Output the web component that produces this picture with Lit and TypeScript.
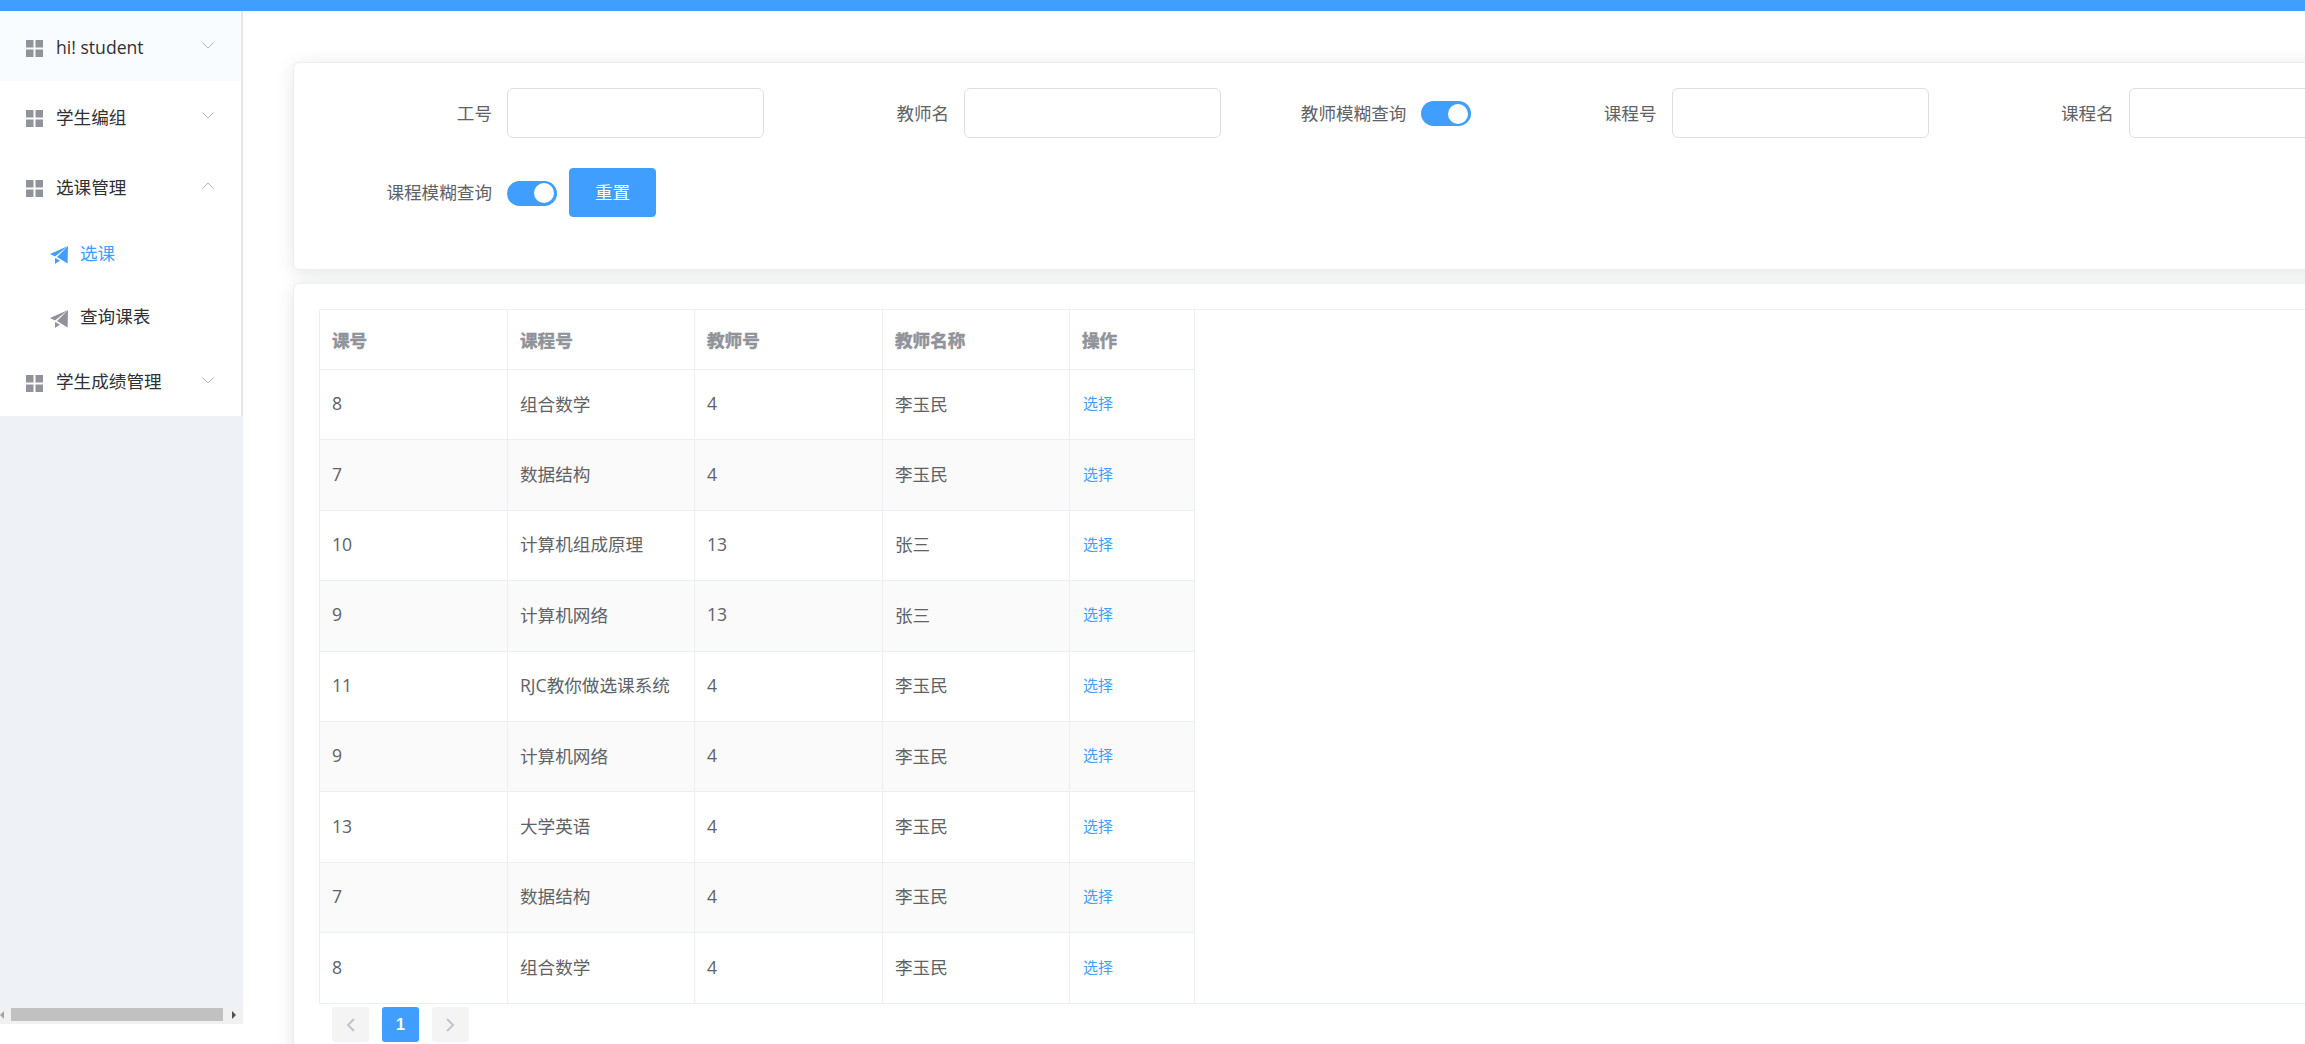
import {LitElement, html, css, svg} from 'lit';
import {customElement} from 'lit/decorators.js';

const ROWS = [
  ['8', '组合数学', '4', '李玉民'],
  ['7', '数据结构', '4', '李玉民'],
  ['10', '计算机组成原理', '13', '张三'],
  ['9', '计算机网络', '13', '张三'],
  ['11', 'RJC教你做选课系统', '4', '李玉民'],
  ['9', '计算机网络', '4', '李玉民'],
  ['13', '大学英语', '4', '李玉民'],
  ['7', '数据结构', '4', '李玉民'],
  ['8', '组合数学', '4', '李玉民'],
];

const gridIcon = html`<svg class="grid-icon" width="17" height="17" viewBox="0 0 17 17">
  <rect width="7.5" height="7.5"></rect>
  <rect x="9.5" width="7.5" height="7.5"></rect>
  <rect y="9.5" width="7.5" height="7.5"></rect>
  <rect x="9.5" y="9.5" width="7.5" height="7.5"></rect>
</svg>`;

const planeIcon = svg`<svg class="plane" width="18" height="18" viewBox="0 0 18 18">
  <path d="M18 0 0 8l5 2.6z"></path>
  <path d="M18 0 7 11l10.6 6.4z"></path>
  <path d="M5 12v6l5-3.4z"></path>
</svg>`;

const chevron = (up = false) => html`<svg class="chevron" width="12" height="7" viewBox="0 0 12 7">
  <path d=${up ? 'M.5 6.5 6 1l5.5 5.5' : 'M.5.5 6 6 11.5.5'}></path>
</svg>`;

@customElement('app-root')
class AppRoot extends LitElement {
  static styles = css`
    :host {
      display: block;
      height: 1044px;
      overflow: hidden;
      background: #fff;
      font-family: 'Open Sans', 'Noto Sans CJK SC', sans-serif;
      font-size: 17.6px;
      color: #606266;
    }
    .topbar {
      height: 11px;
      background: #409eff;
    }
    .layout {
      display: flex;
      height: 1033px;
    }

    .sidebar {
      flex: 0 0 243px;
      height: 1013px;
      display: flex;
      flex-direction: column;
      background: #eef1f6;
    }
    .menu {
      display: grid;
      grid-template-rows: 70px 70px 70px 64px 63px 68px;
      width: 241px;
      background: #fff;
      box-shadow: 2px 0 0 #e6e6e6;
      color: #303133;
    }
    .menu-item {
      display: flex;
      align-items: center;
      padding-left: 26px;
    }
    .menu-item.hover {
      background: #f9fcff;
    }
    .menu-item.hover span {
      margin-top: 2px;
    }
    .menu-item.last {
      padding-bottom: 3px;
    }
    .menu-item span {
      margin-left: 13px;
    }
    .menu-item .grid-icon {
      margin-top: 5px;
    }
    .menu-item .chevron {
      margin-left: auto;
      margin-right: 27px;
      margin-top: -1px;
    }
    .sub-item {
      display: flex;
      align-items: center;
      padding: 0 0 2px 50px;
    }
    .sub-item span {
      margin-left: 12px;
    }
    .sub-item.active {
      color: #409eff;
    }
    .plane {
      margin-top: 6px;
      fill: #909399;
    }
    .active .plane {
      fill: #409eff;
    }
    .grid-icon {
      fill: #909399;
    }
    .chevron {
      fill: none;
      stroke: #b4b7bd;
      stroke-width: 1;
    }
    .sidebar-fill {
      flex: 1;
    }
    .scrollbar {
      position: relative;
      height: 17px;
      background: #f1f1f1;
    }
    .scrollbar .thumb {
      position: absolute;
      left: 11px;
      top: 1px;
      width: 212px;
      height: 13px;
      background: #c1c1c1;
    }
    .scrollbar .arrow {
      position: absolute;
      top: 4px;
      border: 4px solid transparent;
      border-right-width: 0;
      border-left: 4px solid #505050;
      left: 232px;
    }
    .scrollbar .arrow.back {
      left: 0;
      border-left-width: 0;
      border-right: 4px solid #a3a3a3;
      border-left-color: transparent;
    }

    .main {
      flex: 0 0 auto;
      margin-left: 50px;
      padding-top: 51px;
      display: flex;
      flex-direction: column;
      gap: 13px;
    }
    .card {
      box-sizing: border-box;
      flex: none;
      width: 2150px;
      background: #fff;
      border: 1px solid #ebeef5;
      border-radius: 6px;
      box-shadow: 0 3px 18px rgba(0, 0, 0, 0.1);
    }

    .search {
      height: 208px;
      padding: 25px 0 0 66px;
    }
    .form {
      display: flex;
      flex-wrap: wrap;
      align-items: center;
      row-gap: 30px;
      width: 2090px;
    }
    .field {
      display: flex;
      align-items: center;
      margin-right: 53.2px;
    }
    .field label {
      box-sizing: border-box;
      width: 147px;
      padding: 0 15px 2px 0;
      text-align: right;
      white-space: nowrap;
    }
    .field input {
      box-sizing: border-box;
      width: 257px;
      height: 50px;
      border: 1px solid #dcdfe6;
      border-radius: 6px;
      background: #fff;
      outline: none;
    }
    .switch {
      display: flex;
      justify-content: flex-end;
      align-items: center;
      box-sizing: border-box;
      width: 50px;
      height: 25px;
      margin-top: 1px;
      padding-right: 3px;
      border-radius: 13px;
      background: #409eff;
    }
    .switch i {
      width: 20px;
      height: 20px;
      border-radius: 50%;
      background: #fff;
    }
    .reset {
      width: 87px;
      height: 49px;
      margin-left: 12px;
      border: 1px solid #409eff;
      border-radius: 4px;
      background: #409eff;
      color: #fff;
      font: inherit;
      padding: 0 0 3px;
    }

    .list {
      height: 900px;
      padding: 25px 0 0 25px;
    }
    .table-wrap {
      box-sizing: border-box;
      height: 695px;
      border-top: 1px solid #ebeef5;
      border-bottom: 1px solid #ebeef5;
    }
    table {
      border-collapse: separate;
      border-spacing: 0;
      table-layout: fixed;
      width: 875px;
      border-left: 1px solid #ebeef5;
    }
    th,
    td {
      box-sizing: border-box;
      padding: 0 0 0 12px;
      border-right: 1px solid #ebeef5;
      border-bottom: 1px solid #ebeef5;
      text-align: left;
      white-space: nowrap;
    }
    th {
      height: 60px;
      color: #909399;
      font-weight: 700;
      -webkit-text-stroke: 0.5px #909399;
    }
    td {
      height: 70.4px;
      padding-bottom: 3px;
    }
    tr:last-child td {
      border-bottom: 0;
    }
    tbody tr:nth-child(even) td {
      background: #fafafa;
    }
    .pick {
      position: relative;
      top: -1px;
      left: 1px;
      color: #409eff;
      font-size: 15px;
    }

    .pager {
      display: flex;
      gap: 13px;
      margin: 3px 0 0 13px;
    }
    .pager div {
      display: flex;
      align-items: center;
      justify-content: center;
      width: 37px;
      height: 35px;
      border-radius: 3px;
      background: #f4f4f5;
    }
    .pager svg {
      fill: none;
      stroke: #c0c4cc;
      stroke-width: 2;
    }
    .pager .current {
      background: #409eff;
      color: #fff;
      font: 700 16px 'Liberation Sans', sans-serif;
    }
  `;

  render() {
    return html`
      <div class="topbar"></div>
      <div class="layout">
        <aside class="sidebar">
          <nav class="menu">
            <div class="menu-item hover">${gridIcon}<span>hi! student</span>${chevron()}</div>
            <div class="menu-item">${gridIcon}<span>学生编组</span>${chevron()}</div>
            <div class="menu-item">${gridIcon}<span>选课管理</span>${chevron(true)}</div>
            <div class="sub-item active">${planeIcon}<span>选课</span></div>
            <div class="sub-item">${planeIcon}<span>查询课表</span></div>
            <div class="menu-item last">${gridIcon}<span>学生成绩管理</span>${chevron()}</div>
          </nav>
          <div class="sidebar-fill"></div>
          <div class="scrollbar">
            <i class="arrow back"></i>
            <div class="thumb"></div>
            <i class="arrow"></i>
          </div>
        </aside>
        <main class="main">
          <section class="card search">
            <div class="form">
              <div class="field"><label>工号</label><input /></div>
              <div class="field"><label>教师名</label><input /></div>
              <div class="field"><label>教师模糊查询</label><div class="switch"><i></i></div></div>
              <div class="field"><label>课程号</label><input /></div>
              <div class="field"><label>课程名</label><input /></div>
              <div class="field">
                <label>课程模糊查询</label><div class="switch"><i></i></div>
                <button class="reset">重置</button>
              </div>
            </div>
          </section>
          <section class="card list">
            <div class="table-wrap">
              <table>
                <colgroup>
                  <col style="width:188px" />
                  <col style="width:187px" />
                  <col style="width:188px" />
                  <col style="width:187px" />
                  <col style="width:125px" />
                </colgroup>
                <thead>
                  <tr><th>课号</th><th>课程号</th><th>教师号</th><th>教师名称</th><th>操作</th></tr>
                </thead>
                <tbody>
                  ${ROWS.map(
                    (row) => html`<tr>
                      ${row.map((cell) => html`<td>${cell}</td>`)}
                      <td><a class="pick">选择</a></td>
                    </tr>`
                  )}
                </tbody>
              </table>
            </div>
            <div class="pager">
              <div><svg width="11" height="16" viewBox="0 0 11 16"><path d="M9 2 3 8l6 6"></path></svg></div>
              <div class="current">1</div>
              <div><svg width="11" height="16" viewBox="0 0 11 16"><path d="m2 2 6 6-6 6"></path></svg></div>
            </div>
          </section>
        </main>
      </div>
    `;
  }
}
